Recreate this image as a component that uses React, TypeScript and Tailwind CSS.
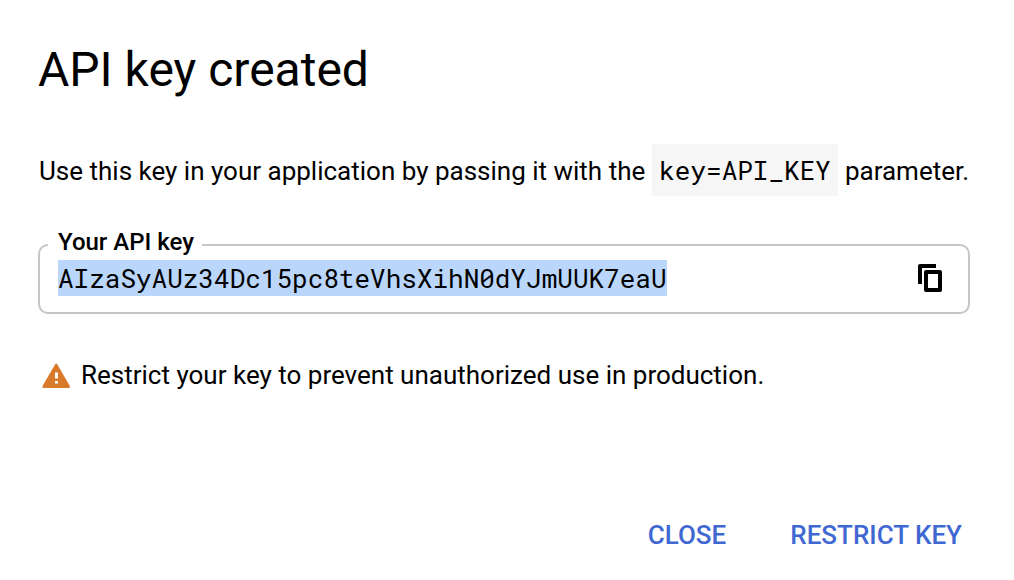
import { useState } from "react";

const API_KEY = "AIzaSyAUz34Dc15pc8teVhsXihN0dYJmUUK7eaU";

function CopyIcon() {
  return (
    <svg viewBox="0 0 26 30" className="h-[30px] w-[26px]" fill="currentColor" aria-hidden="true">
      <path d="M18 1H2Q0 1 0 3V21H4V5H18Z" />
      <path
        fillRule="evenodd"
        d="M8 7H22Q24 7 24 9V27Q24 29 22 29H8Q6 29 6 27V9Q6 7 8 7ZM10 11V25H20V11Z"
      />
    </svg>
  );
}

function WarningIcon() {
  return (
    <svg viewBox="0 0 28 28" className="size-7 shrink-0" aria-hidden="true">
      <path
        d="M13.2 3.2Q14.2 1.8 15.2 3.2L27.7 24.8Q28.5 27 26.7 27H1.7Q-.1 27 .7 24.8Z"
        fill="#d97a2b"
      />
      <path d="M13 11.5h3v6h-3zM13 20h3v2.5h-3z" fill="#fff" />
    </svg>
  );
}

export default function App() {
  const [open, setOpen] = useState(true);
  const actionClass = "cursor-pointer text-[26px] leading-8 font-medium text-[#3f68d2]";

  if (!open) return null;

  return (
    <main
      role="dialog"
      aria-labelledby="dialog-title"
      className="flex min-h-screen flex-col bg-white pt-10 pr-11 pb-[29px] pl-[38px] font-['Roboto',sans-serif] text-[26px] leading-8 text-black"
    >
      <h1 id="dialog-title" className="text-5xl leading-[60px]">
        API key created
      </h1>

      <p className="mt-11 flex items-baseline gap-[7px] pl-px whitespace-nowrap">
        <span>Use this key in your application by passing it with the</span>
        <code className="bg-[#f6f6f6] px-[7px] py-[10px] font-['Roboto_Mono','DejaVu_Sans_Mono',monospace]">
          key=API_KEY
        </code>
        <span>parameter.</span>
      </p>

      <fieldset className="mt-8 rounded-[10px] border-2 border-[#c6c6c6] pr-6 pb-4 pl-[18px]">
        <legend className="-ml-[10px] pr-2 pb-1.5 pl-[10px] text-2xl leading-7 font-medium">
          <label htmlFor="api-key">Your API key</label>
        </legend>
        <div className="-mt-0.5 flex items-center justify-between">
          <input
            id="api-key"
            readOnly
            value={API_KEY}
            className="field-sizing-content h-9 min-w-0 bg-[#bad6fb] font-['Roboto_Mono','DejaVu_Sans_Mono',monospace] outline-none"
          />
          <button
            type="button"
            aria-label="Copy API key"
            onClick={() => navigator.clipboard?.writeText(API_KEY)}
            className="cursor-pointer"
          >
            <CopyIcon />
          </button>
        </div>
      </fieldset>

      <p className="mt-[45px] flex items-center gap-[11px] pl-1">
        <WarningIcon />
        Restrict your key to prevent unauthorized use in production.
      </p>

      <div className="mt-auto flex justify-end gap-16 pr-2">
        <button type="button" className={actionClass} onClick={() => setOpen(false)}>
          CLOSE
        </button>
        <button type="button" className={actionClass}>
          RESTRICT KEY
        </button>
      </div>
    </main>
  );
}
